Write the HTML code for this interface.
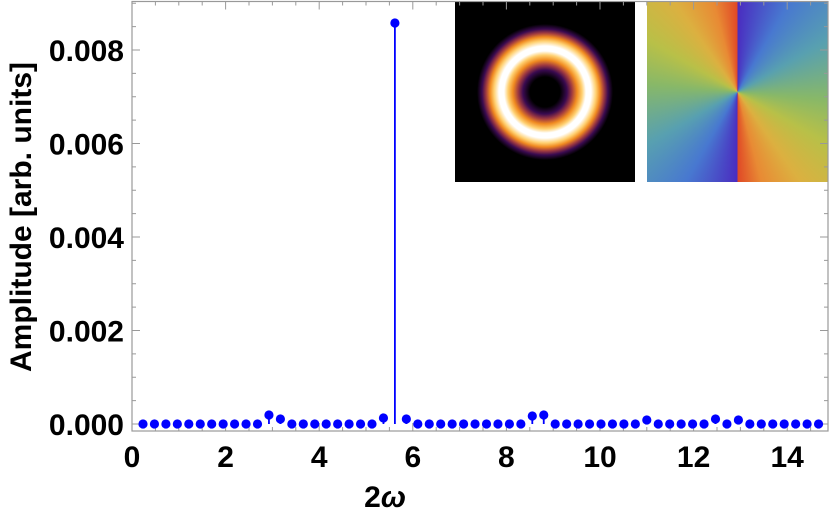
<!DOCTYPE html>
<html><head><meta charset="utf-8"><style>
html,body{margin:0;padding:0;background:#fff;width:830px;height:522px;overflow:hidden;position:relative}
svg{position:absolute;left:0;top:0}
.t{font-family:"Liberation Sans",sans-serif;font-weight:bold;font-size:30px;fill:#000}
.a{font-family:"Liberation Sans",sans-serif;font-weight:bold;font-size:30px;fill:#000}
#phase{position:absolute;left:647px;top:2px;width:181px;height:180px;
background:conic-gradient(from 0deg at 50% 50%,#4a2cc0 0deg,#4878d0 30deg,#58a0b0 60deg,#88b868 95deg,#b8c048 120deg,#dcb040 145deg,#e88a34 165deg,#e04826 180deg,#4a2cc0 180.01deg,#4878d0 210deg,#58a0b0 240deg,#88b868 275deg,#b8c048 300deg,#dcb040 325deg,#e88a34 345deg,#e04826 360deg)}
#int{position:absolute;left:455px;top:2px;width:180px;height:180px;
background:radial-gradient(circle at 50% 50%,#000 0px,#000 15px,#3a0a50 22px,#a03a40 27px,#f08a20 32px,#ffd070 37px,#fff 41px,#fff 46px,#ffd070 51px,#f08a20 55px,#a03a40 59px,#3a0a50 63px,#000 68px)}
</style></head><body>
<div id="int"></div><div id="phase"></div>
<svg id="s" width="830" height="522" xmlns="http://www.w3.org/2000/svg"></svg>
<script>
var s=document.getElementById('s'),h='';
var x0=132,ux=46.8,y0=424,uy=46.75/0.001;
function X(v){return x0+v*ux}function Y(v){return y0-v*uy}
h+='<rect x="132" y="1.5" width="696" height="429.5" fill="none" stroke="#999" stroke-width="1.2"/>';
for(var v=0;v<=15.01;v+=0.5){var x=X(v),L=(Math.abs(v%2)<0.01)?8:4;
h+='<line x1="'+x+'" y1="431" x2="'+x+'" y2="'+(431-L)+'" stroke="#999"/>';
h+='<line x1="'+x+'" y1="1.5" x2="'+x+'" y2="'+(1.5+L)+'" stroke="#999"/>';
if(Math.abs(v%2)<0.01&&v<15)h+='<text class="t" x="'+x+'" y="467" text-anchor="middle">'+v+'</text>';}
for(var k=0;k<=18;k++){var v=k*0.0005,y=Y(v);if(y<1)continue;var L=(k%4==0)?8:4;
h+='<line x1="132" y1="'+y+'" x2="'+(132+L)+'" y2="'+y+'" stroke="#999"/>';
h+='<line x1="828" y1="'+y+'" x2="'+(828-L)+'" y2="'+y+'" stroke="#999"/>';
if(k%4==0)h+='<text class="t" x="124" y="'+(y+11)+'" text-anchor="end">'+v.toFixed(3)+'</text>';}
var sp={11:415,12:419,21:418,22:23,23:419,34:416,35:415,50:419,44:420,52:420};
for(var k=0;k<60;k++){var x=143+k*11.45;if(x>828)break;var y=sp[k]||424;
if(y<424)h+='<line x1="'+x+'" y1="424" x2="'+x+'" y2="'+y+'" stroke="#00f" stroke-width="1.8"/>';
h+='<circle cx="'+x+'" cy="'+y+'" r="4.6" fill="#00f"/>';}
h+='<text class="t" x="385" y="507" text-anchor="middle">2<tspan font-style="italic">ω</tspan></text>';
h+='<text class="a" transform="translate(31,217) rotate(-90)" text-anchor="middle">Amplitude [arb. units]</text>';
s.innerHTML=h;
</script>
</body></html>
